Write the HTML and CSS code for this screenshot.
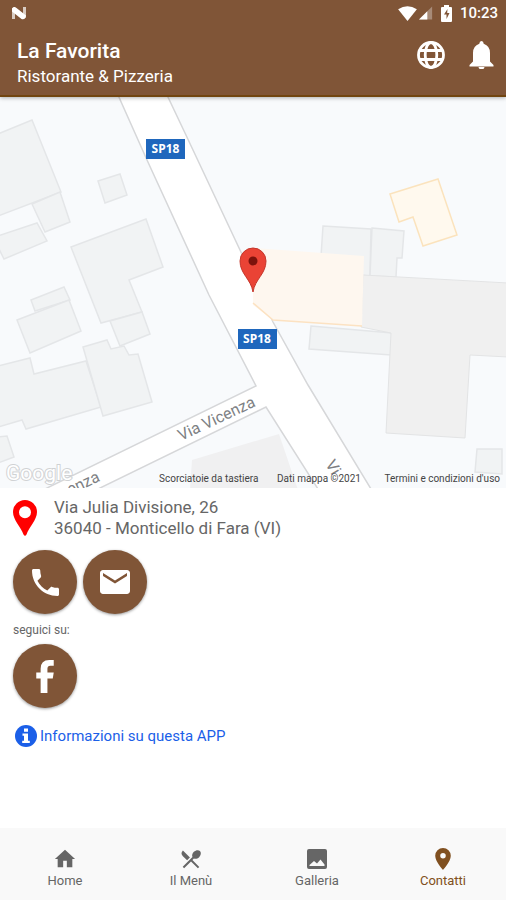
FILE: index.html
```html
<!DOCTYPE html>
<html lang="it">
<head>
<meta charset="utf-8">
<meta name="viewport" content="width=device-width, initial-scale=1">
<title>La Favorita</title>
<link rel="stylesheet" href="styles.css">
</head>
<body>
<div class="app">
  <header class="header">
    <div class="status">
      <svg class="status-logo" viewBox="0 0 16 14" aria-hidden="true"><path d="M1 2.500 4 1v12H1zM12 1h3v10.500L12 13z" fill="#d8ccc3"/><path d="M1 2.500Q3 0 5.500 2L15 9.500Q14.500 14 10.500 13L1 5.500z" fill="#fff"/></svg>
      <div class="status-icons">
        <svg class="wifi" viewBox="0 0 20 16" aria-hidden="true"><path d="M0 3.500Q10-3 20 3.500L10 16z" fill="#fff"/></svg>
        <svg class="signal" viewBox="0 0 16 15" aria-hidden="true"><path d="M0 15 15 0v15z" fill="#a78b78"/><path d="M0 15 9.500 5.500V15z" fill="#fff"/></svg>
        <svg class="battery" viewBox="0 0 11 17" aria-hidden="true"><path d="M3 0h5v2h2q1 0 1 1v13q0 1-1 1H1q-1 0-1-1V3q0-1 1-1h2z" fill="#fff"/><path d="M6.500 4 3 9.500h2.500V14L8.500 8H6.200z" fill="#805537"/></svg>
        <span class="clock">10:23</span>
      </div>
    </div>
    <div class="bar">
      <div class="titles">
        <h1 class="title">La Favorita</h1>
        <p class="subtitle">Ristorante &amp; Pizzeria</p>
      </div>
      <div class="actions">
        <button class="icon-button" type="button" aria-label="Lingua">
          <svg class="globe" viewBox="0 0 28 28" fill="none" stroke="#fff" stroke-width="2.800" aria-hidden="true"><circle cx="14" cy="14" r="12.500"/><ellipse cx="14" cy="14" rx="5.800" ry="12.500"/><path d="M2.500 9.500h23M2.500 18.500h23"/></svg>
        </button>
        <button class="icon-button" type="button" aria-label="Notifiche">
          <svg class="bell" viewBox="0 0 24 28" fill="#fff" aria-hidden="true"><path d="M12 0q2 0 2.200 2.800Q20.500 5 20.500 12v8.500L24 24v1.500H0V24l3.500-3.500V12Q3.500 5 9.800 2.800 10 0 12 0zM9 26h6q-.5 2.500-3 2.500T9 26z"/></svg>
        </button>
      </div>
    </div>
  </header>

  <main class="content">
    <svg class="map" viewBox="0 97 506 391" preserveAspectRatio="xMidYMid slice" role="img" aria-label="Mappa">
      <rect y="97" width="506" height="391" fill="#f8fafc"/>
      <g class="building">
        <path d="M-2 134 32 120 61 192-2 216z"/>
        <path d="M32 204 60 192 70 222 45 232z"/>
        <path d="M-2 236 37 223 47 241 4 259-2 247z"/>
        <path d="M98 181 120 174 127 195 105 203z"/>
        <path d="M71 247 146 219 163 267 129 280 142 312 101 323z"/>
        <path d="M110 321 142 312 150 334 120 346z"/>
        <path d="M31 300 64 287 70 300 35 311z"/>
        <path d="M17 320 69 300 81 331 30 353z"/>
        <path d="M-2 366 30 358 34 374 86 361 101 407 26 429 22 420-2 427z"/>
        <path d="M83 347 107 340 111 349 124 346 129 355 138 354 152 402 103 416z"/>
        <path d="M-2 437 7 436 14 457-2 463z"/>
        <path d="M323 226 371 229 370 276 320 272z"/>
        <path d="M372 228 404 231 402 258 397 258 396 277 370 276z"/>
        <path d="M311 326 392 333 391 355 309 349z"/>
        <path d="M477 449H502V474L475 472z"/>
      </g>
      <path d="M192 460 279 434 298 490H190z" fill="#f0f0f1"/>
      <path d="M363 275 508 283V357L470 355 465 438 386 433 391 333 361 327z" fill="#f0f0f0" stroke="#e3e4e5"/>
      <path d="M390 194 438 179 457 235 423 246 413 217 399 222z" fill="#fff9ee" stroke="#fbe3bd" stroke-width="1.500"/>
      <path d="M118 95 147 160 209 295 256 386 45 489H98L266 407 318 489H371L308 385 273 322 240 250 185 133 167 95z" fill="#fff" stroke="#d6d7d9" stroke-width="1.500"/>
      <path d="M253 248 364 256 362 326 273 320 253 305z" fill="#fef7ef"/>
      <path d="M253 303 273 320 362 326" fill="none" stroke="#fce2c2" stroke-width="1.500"/>
      <g class="street">
        <text transform="translate(181 441) rotate(-25)">Via Vicenza</text>
        <text transform="translate(70 495) rotate(-25)">enza</text>
        <text transform="translate(325 464) rotate(59)">Vi</text>
      </g>
      <g class="shield">
        <rect x="146" y="139" width="39" height="20"/><text x="165.500" y="153">SP18</text>
        <rect x="238" y="329" width="39" height="20"/><text x="257" y="343">SP18</text>
      </g>
      <path d="M253 292C251 279 240 274 240 261A13 13 0 0 1 266 261C266 274 255 279 253 292z" fill="#ea4335" stroke="#c5372c"/>
      <circle cx="253" cy="261" r="4.500" fill="#7c120c"/>
      <text class="brand" x="6" y="480">Google</text>
      <g class="credits">
        <text x="159" y="482">Scorciatoie da tastiera</text>
        <text x="277" y="482">Dati mappa ©2021</text>
        <text x="500" y="482" text-anchor="end">Termini e condizioni d'uso</text>
      </g>
    </svg>

    <section class="details">
      <div class="address">
        <svg class="address-pin" viewBox="0 0 24 36" aria-hidden="true"><path fill="red" fill-rule="evenodd" d="M12 0A12 12 0 0 1 24 12C24 20 16 27 13.500 34.500Q12 37 10.500 34.500C8 27 0 20 0 12A12 12 0 0 1 12 0zM12 6.200A6 6 0 1 0 12 18.200 6 6 0 0 0 12 6.200z"/></svg>
        <p class="address-text">Via Julia Divisione, 26<br>36040 - Monticello di Fara (VI)</p>
      </div>
      <div class="contacts">
        <button class="round" type="button" aria-label="Telefono">
          <svg class="phone" viewBox="3 3 18 18" fill="#fff" aria-hidden="true"><path d="M6.620 10.790c1.440 2.830 3.760 5.140 6.590 6.590l2.200-2.200c.27-.27.67-.36 1.020-.24 1.120.37 2.330.57 3.570.57.550 0 1 .45 1 1V20c0 .55-.45 1-1 1C10.610 21 3 13.390 3 4c0-.55.450-1 1-1h3.500c.55 0 1 .45 1 1 0 1.250.2 2.450.57 3.570.11.350.03.740-.25 1.020z"/></svg>
        </button>
        <button class="round" type="button" aria-label="Email">
          <svg class="mail" viewBox="2 4 20 16" fill="#fff" aria-hidden="true"><path d="M20 4H4c-1.100 0-2 .9-2 2v12c0 1.100.9 2 2 2h16c1.100 0 2-.9 2-2V6c0-1.100-.9-2-2-2zm0 4-8 5-8-5V6l8 5 8-5z"/></svg>
        </button>
      </div>
      <p class="follow">seguici su:</p>
      <button class="round" type="button" aria-label="Facebook">
        <svg class="facebook" viewBox="0 0 18 34" fill="#fff" aria-hidden="true"><path d="M4.500 34V19H0v-6h4.500V9Q4.500 0 13.500 0H18v6h-3.500Q11.500 6 11.500 9v4H18l-1 6h-5.500v15z"/></svg>
      </button>
      <a class="info" href="#info">
        <svg class="info-icon" viewBox="0 0 22 22" aria-hidden="true"><circle cx="11" cy="11" r="11" fill="#1b5fe8"/><path fill="#fff" d="M9 3.500h4v3.300H9zM7.500 8.500H13v7.200h1.800V18H7.200v-2.300H9v-4.900H7.500z"/></svg>
        <span>Informazioni su questa APP</span>
      </a>
    </section>
  </main>

  <nav class="nav">
    <a class="tab" href="#home">
      <svg class="tab-icon" viewBox="0 0 24 24" fill="currentColor" aria-hidden="true"><path d="M10 21v-7h4v7h6v-9h3L12 2 1 12h3v9z"/></svg>
      <span>Home</span>
    </a>
    <a class="tab" href="#menu">
      <svg class="tab-icon" viewBox="1 1 22 22" fill="currentColor" aria-hidden="true"><path d="m8.100 13.340 2.830-2.830L3.910 3.500a4.008 4.008 0 0 0 0 5.660zm6.780-1.810c1.530.71 3.680.21 5.270-1.380 1.910-1.910 2.280-4.650.81-6.120-1.460-1.460-4.200-1.100-6.120.81-1.590 1.590-2.090 3.740-1.380 5.270L3.700 19.870l1.410 1.410L12 14.410l6.880 6.880 1.410-1.410L13.410 13z"/></svg>
      <span>Il Menù</span>
    </a>
    <a class="tab" href="#galleria">
      <svg class="tab-icon" viewBox="1 1 22 22" fill="currentColor" aria-hidden="true"><path fill-rule="evenodd" d="M4 2h16q2 0 2 2v16q0 2-2 2H4q-2 0-2-2V4q0-2 2-2zM4.500 19h15v-1.500l-4-5-3.500 4-3-2.500-4.500 4z"/></svg>
      <span>Galleria</span>
    </a>
    <a class="tab active" href="#contatti" aria-current="page">
      <svg class="tab-icon" viewBox="0 0 24 24" fill="currentColor" aria-hidden="true"><path fill-rule="evenodd" d="M12 0a8.500 8.500 0 0 0-8.500 8.500C3.500 15 12 24 12 24s8.500-9 8.500-15.500A8.500 8.500 0 0 0 12 0zm0 5.500a3 3 0 1 1 0 6 3 3 0 0 1 0-6z"/></svg>
      <span>Contatti</span>
    </a>
  </nav>
</div>
</body>
</html>
```
FILE: styles.css
```css
* { box-sizing: border-box; }

body {
  margin: 0;
  background: #fff;
  color: #666;
  font-family: Roboto, "Liberation Sans", sans-serif;
}

h1, p { margin: 0; }
svg { display: block; }
a { color: inherit; text-decoration: none; }
button { padding: 0; border: 0; cursor: pointer; }

.app {
  display: flex;
  flex-direction: column;
  min-height: 100vh;
}

.header {
  position: relative;
  background: #805537;
  color: #fff;
  border-bottom: 2px solid #714510;
  box-shadow: 0 1px 4px rgba(0, 0, 0, 0.3);
}

.status {
  display: flex;
  align-items: center;
  justify-content: space-between;
  height: 26px;
  padding: 0 8px 0 11px;
}

.status-logo { width: 16px; height: 14px; }
.status-icons { display: flex; align-items: center; }
.wifi { width: 19px; height: 15px; }
.signal { width: 14px; height: 14px; margin-left: 2px; }
.battery { width: 11px; height: 17px; margin: 0 8px; }

.clock {
  font-size: 15px;
  font-weight: 500;
  line-height: 20px;
}

.bar {
  display: flex;
  justify-content: space-between;
  padding: 12px 12px 6px 17px;
}

.title {
  font-size: 21px;
  font-weight: 500;
  line-height: 26px;
}

.subtitle {
  font-size: 17px;
  line-height: 25px;
}

.actions {
  display: flex;
  align-items: flex-start;
  gap: 24px;
  padding-top: 3px;
}

.icon-button { background: none; }
.globe { width: 28px; height: 28px; }
.bell { width: 25px; height: 28px; }

.content { flex: 1; }
.map { width: 100%; aspect-ratio: 506 / 391; }
.building { fill: #f1f3f4; stroke: #e4e6e8; stroke-width: 1.5px; }
.street { fill: #7d7f83; font-size: 16px; }
.shield rect { fill: #1f67bd; }

.shield text {
  fill: #fff;
  font-family: "Noto Sans", sans-serif;
  font-size: 12px;
  font-weight: 700;
  text-anchor: middle;
}

.brand {
  fill: #fff;
  stroke: #d0d2d4;
  stroke-width: 2px;
  paint-order: stroke;
  font-size: 21px;
}

.credits { fill: #444; font-size: 10px; }

.details { padding: 9px 13px; }

.address {
  display: flex;
  align-items: center;
  gap: 17px;
}

.address-pin { width: 24px; height: 36px; }

.address-text {
  font-size: 17px;
  line-height: 21px;
}

.contacts {
  display: flex;
  gap: 6px;
  margin-top: 11px;
}

.round {
  display: grid;
  place-items: center;
  width: 64px;
  height: 64px;
  border-radius: 50%;
  background: #805537;
  box-shadow: 0 1px 3px rgba(0, 0, 0, 0.4);
}

.phone { width: 27px; height: 27px; }
.mail { width: 30px; height: 24px; }
.facebook { width: 18px; height: 33px; }

.follow {
  padding: 6px 0 4px;
  font-size: 12px;
  line-height: 20px;
}

.info {
  display: flex;
  align-items: center;
  gap: 3px;
  width: fit-content;
  margin: 16px 0 0 2px;
  color: #1b5fe8;
  font-size: 15px;
  line-height: 24px;
}

.info-icon { width: 22px; height: 22px; }

.nav {
  display: flex;
  height: 72px;
  padding-left: 2px;
  background: #f9f9f9;
}

.tab {
  display: flex;
  flex: 1;
  flex-direction: column;
  align-items: center;
  padding-top: 20px;
  color: #666;
  font-size: 13px;
  line-height: 22px;
}

.tab-icon { width: 22px; height: 22px; }
.active { color: #805020; }
```
